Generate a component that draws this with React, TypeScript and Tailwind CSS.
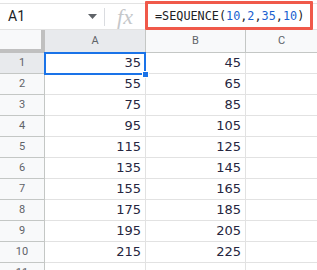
import React from "react";

const rows: [number, number][] = [
  [35, 45],
  [55, 65],
  [75, 85],
  [95, 105],
  [115, 125],
  [135, 145],
  [155, 165],
  [175, 185],
  [195, 205],
  [215, 225],
];

export default function App() {
  return (
    <div className="relative w-[317px] h-[270px] overflow-hidden bg-white" style={{ fontFamily: "Roboto, 'Liberation Sans', sans-serif" }}>
      <div className="h-[4px] border-b border-[#e3e3e3]" />
      <div className="flex h-[26px] items-center border-b border-[#e3e3e3]">
        <div className="flex w-[104px] items-center pl-[8px] pr-[7px]">
          <span className="flex-1 text-[14px] text-[#202124]">A1</span>
          <svg width="9" height="5" viewBox="0 0 9 5"><path d="M0 0h9L4.5 5z" fill="#5f6368" /></svg>
        </div>
        <div className="h-[18px] w-px bg-[#dadce0]" />
        <div className="flex w-[40px] items-center justify-center">
          <span className="text-[22px] leading-none italic text-[#c5c7ca]" style={{ fontFamily: "'Liberation Serif', serif" }}>fx</span>
        </div>
        <div className="pl-[10px] text-[11.8px] text-[#202124]" style={{ fontFamily: "'DejaVu Sans Mono', monospace" }}>
          =SEQUENCE(<span className="text-[#1a5fd0]">10</span>,<span className="text-[#1a5fd0]">2</span>,<span className="text-[#1a5fd0]">35</span>,<span className="text-[#1a5fd0]">10</span>)
        </div>
      </div>

      <div className="grid grid-cols-[45px_101px_100px_1fr] auto-rows-[21px] grid-rows-[23px]">
        <div className="bg-[#f8f9fa] border-r-4 border-b-4 border-[#c0c0c0]" />
        <div className="flex items-center justify-center bg-[#e8eaed] border-r border-b border-[#c4c7c5] text-[11px] text-[#5f6368]">A</div>
        <div className="flex items-center justify-center bg-[#f8f9fa] border-r border-b border-[#c4c7c5] text-[11px] text-[#5f6368]">B</div>
        <div className="flex items-center justify-center bg-[#f8f9fa] border-b border-[#c4c7c5] text-[11px] text-[#5f6368]">C</div>
        {rows.map(([a, b], i) => (
          <React.Fragment key={i}>
            <div className={`flex items-center justify-center border-r border-b border-[#c4c7c5] text-[11px] text-[#5f6368] ${i === 0 ? "bg-[#e8eaed]" : "bg-[#f8f9fa]"}`}>{i + 1}</div>
            <div className="flex items-center justify-end pr-[4px] border-r border-b border-[#e2e2e2] text-[13px] text-[#262640]" style={{ fontFamily: "'DejaVu Sans', sans-serif" }}>{a}</div>
            <div className="flex items-center justify-end pr-[4px] border-r border-b border-[#e2e2e2] text-[13px] text-[#262640]" style={{ fontFamily: "'DejaVu Sans', sans-serif" }}>{b}</div>
            <div className="border-b border-[#e2e2e2]" />
          </React.Fragment>
        ))}
        <div className="flex items-start justify-center border-r border-[#c4c7c5] bg-[#f8f9fa] pt-[2px] text-[11px] text-[#5f6368]">11</div>
        <div className="border-r border-[#e2e2e2]" />
        <div className="border-r border-[#e2e2e2]" />
        <div />
      </div>

      <div className="absolute left-[44px] top-[52px] h-[23px] w-[102px] border-2 border-[#1a73e8]" />
      <div className="absolute left-[142px] top-[71px] h-[7px] w-[7px] border border-white bg-[#1a73e8]" />
      <div className="absolute left-[145px] top-[1px] h-[29px] w-[168px] border-[3px] border-[#f0594a] rounded-[1px]" />
    </div>
  );
}
